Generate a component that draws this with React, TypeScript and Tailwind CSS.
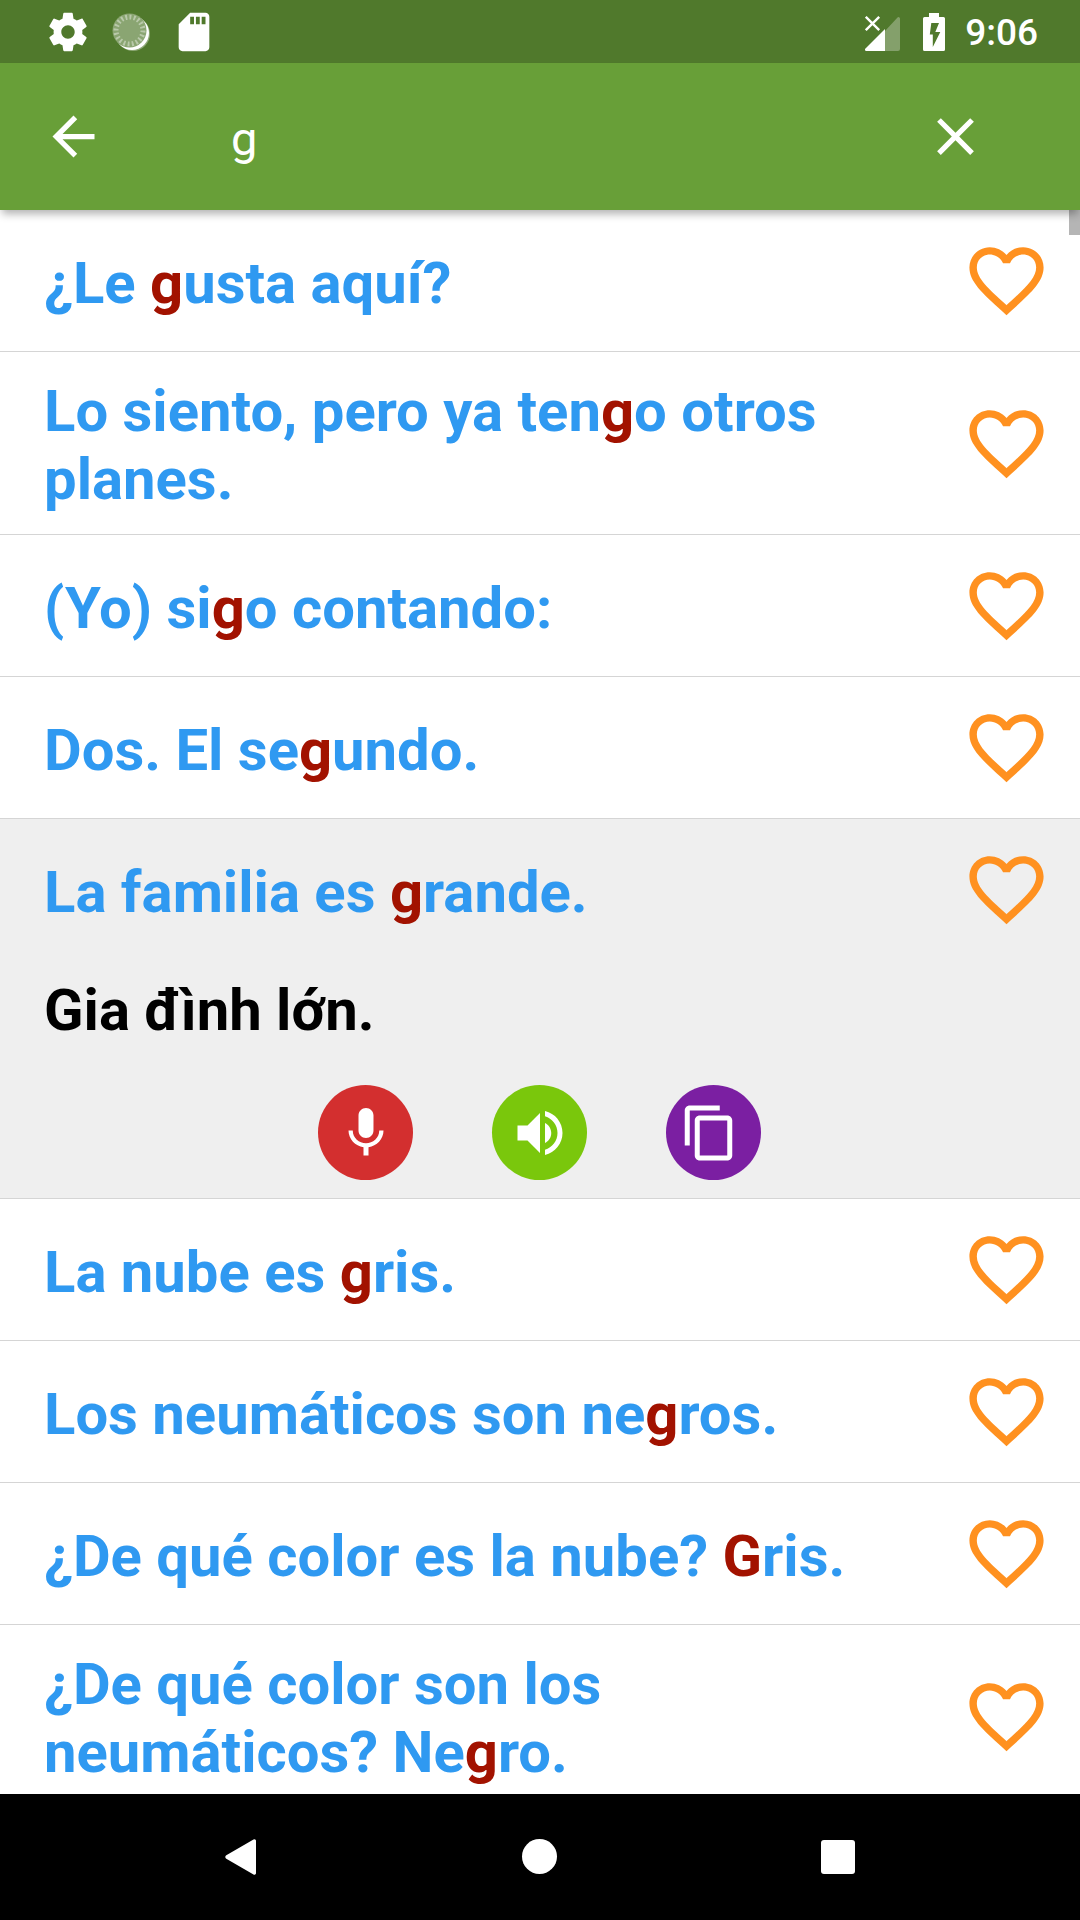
import { useState } from "react";
import type { ReactNode } from "react";
import clsx from "clsx";

type Phrase = {
  text: string;
  translation?: string;
};

const PHRASES: Phrase[] = [
  { text: "¿Le gusta aquí?" },
  { text: "Lo siento, pero ya tengo otros planes." },
  { text: "(Yo) sigo contando:" },
  { text: "Dos. El segundo." },
  { text: "La familia es grande.", translation: "Gia đình lớn." },
  { text: "La nube es gris." },
  { text: "Los neumáticos son negros." },
  { text: "¿De qué color es la nube? Gris." },
  { text: "¿De qué color son los neumáticos? Negro." },
];

function Icon({
  d,
  className,
  viewBox = "0 0 24 24",
}: {
  d: string;
  className: string;
  viewBox?: string;
}) {
  return (
    <svg viewBox={viewBox} fill="currentColor" className={className} aria-hidden="true">
      <path d={d} />
    </svg>
  );
}

const ICONS = {
  settings:
    "M19.43 12.98c.04-.32.07-.64.07-.98s-.03-.66-.07-.98l2.11-1.65c.19-.15.24-.42.12-.64l-2-3.46c-.12-.22-.39-.3-.61-.22l-2.49 1c-.52-.4-1.08-.73-1.69-.98l-.38-2.65A.488.488 0 0 0 14 2h-4c-.25 0-.46.18-.49.42l-.38 2.65c-.61.25-1.17.59-1.69.98l-2.49-1c-.23-.09-.49 0-.61.22l-2 3.46c-.13.22-.07.49.12.64l2.11 1.65c-.04.32-.07.65-.07.98s.03.66.07.98l-2.11 1.65c-.19.15-.24.42-.12.64l2 3.46c.12.22.39.3.61.22l2.49-1c.52.4 1.08.73 1.69.98l.38 2.65c.03.24.24.42.49.42h4c.25 0 .46-.18.49-.42l.38-2.65c.61-.25 1.17-.59 1.69-.98l2.49 1c.23.09.49 0 .61-.22l2-3.46c.12-.22.07-.49-.12-.64l-2.11-1.65zM12 15.5c-1.93 0-3.5-1.57-3.5-3.5s1.57-3.5 3.5-3.5 3.5 1.57 3.5 3.5-1.57 3.5-3.5 3.5z",
  sdCard:
    "M18 2h-8L4.02 8 4 20c0 1.1.9 2 2 2h12c1.1 0 2-.9 2-2V4c0-1.1-.9-2-2-2zm-6 6h-2V4h2v4zm3 0h-2V4h2v4zm3 0h-2V4h2v4z",
  back: "M20 11H7.83l5.59-5.59L12 4l-8 8 8 8 1.41-1.41L7.83 13H20v-2z",
  close:
    "M19 6.41L17.59 5 12 10.59 6.41 5 5 6.41 10.59 12 5 17.59 6.41 19 12 13.41 17.59 19 19 17.59 13.41 12z",
  heart:
    "M16.5 3c-1.74 0-3.41.81-4.5 2.09C10.91 3.81 9.24 3 7.5 3 4.42 3 2 5.42 2 8.5c0 3.78 3.4 6.86 8.55 11.54L12 21.35l1.45-1.32C18.6 15.36 22 12.28 22 8.5 22 5.42 19.58 3 16.5 3zm-4.4 15.55l-.1.1-.1-.1C7.14 14.24 4 11.39 4 8.5 4 6.5 5.5 5 7.5 5c1.54 0 3.04.99 3.57 2.36h1.87C13.46 5.99 14.96 5 16.5 5c2 0 3.5 1.5 3.5 3.5 0 2.89-3.14 5.74-7.9 10.05z",
  mic: "M12 14c1.66 0 2.99-1.34 2.99-3L15 5c0-1.66-1.34-3-3-3S9 3.34 9 5v6c0 1.66 1.34 3 3 3zm5.3-3c0 3-2.54 5.1-5.3 5.1S6.7 14 6.7 11H5c0 3.41 2.72 6.23 6 6.72V21h2v-3.28c3.28-.48 6-3.3 6-6.72h-1.7z",
  volume:
    "M3 9v6h4l5 5V4L7 9H3zm13.5 3c0-1.77-1.02-3.29-2.5-4.03v8.05c1.48-.73 2.5-2.25 2.5-4.02zM14 3.23v2.06c2.89.86 5 3.54 5 6.71s-2.11 5.85-5 6.71v2.06c4.01-.91 7-4.49 7-8.77s-2.99-7.86-7-8.77z",
  copy: "M16 1H4c-1.1 0-2 .9-2 2v14h2V3h12V1zm3 4H8c-1.1 0-2 .9-2 2v14c0 1.1.9 2 2 2h11c1.1 0 2-.9 2-2V7c0-1.1-.9-2-2-2zm0 16H8V7h11v14z",
};

function StatusBar() {
  return (
    <div className="flex h-[63px] shrink-0 items-center justify-between bg-[#50792c] pr-[42px] pl-[45px] text-white">
      <div className="flex items-center gap-[17px]">
        <Icon d={ICONS.settings} className="size-[46px]" />
        <svg viewBox="0 0 46 46" className="size-[46px]" aria-hidden="true">
          <circle cx="25" cy="25" r="17" fill="#fff" fillOpacity="0.35" />
          <circle cx="24" cy="24" r="17" fill="#fff" />
          <circle cx="21.5" cy="21.5" r="17" fill="#8aa572" />
          <circle
            cx="21.5"
            cy="21.5"
            r="13.5"
            fill="none"
            stroke="#b9c9aa"
            strokeWidth="5"
            strokeDasharray="1.8 2.2"
            pathLength="80"
          />
        </svg>
        <Icon d={ICONS.sdCard} className="size-[46px]" />
      </div>
      <div className="flex items-center">
        <svg viewBox="0 0 35 38" className="mr-[23px] h-[38px] w-[35px]" aria-hidden="true">
          <path d="M20 18 32.500 4.500a1.500 1.500 0 0 1 2.500 1V36a2 2 0 0 1-2 2H20z" fill="#84a06b" />
          <path d="M20 16v22H1.500a1.400 1.400 0 0 1-1-2.500z" fill="#fff" />
          <path d="M.8 3.800 14.200 17.200M14.200 3.800.8 17.200" stroke="#fff" strokeWidth="2.400" />
        </svg>
        <svg viewBox="0 0 22 38" className="mr-[20px] h-[38px] w-[22px]" aria-hidden="true">
          <path
            d="M6 0h10v4h4.500a1.500 1.500 0 0 1 1.500 1.500v31a1.500 1.500 0 0 1-1.500 1.500h-19A1.500 1.500 0 0 1 0 36.500v-31A1.500 1.500 0 0 1 1.500 4H6zM8.300 10 6.800 21.500h3V34L17.300 19h-5L16 10z"
            fill="#fff"
            fillRule="evenodd"
          />
        </svg>
        <span className="pt-0.5 text-[37px] leading-[44px] font-medium">9:06</span>
      </div>
    </div>
  );
}

function SearchBar({ query, onChange }: { query: string; onChange: (value: string) => void }) {
  return (
    <header className="z-10 flex h-[147px] shrink-0 items-center bg-[#689f38] pr-[93px] pl-[42px] text-white shadow-[0_6px_8px_-2px_rgba(0,0,0,0.3)]">
      <button type="button" aria-label="Back">
        <Icon d={ICONS.back} className="size-[63px]" />
      </button>
      <input
        type="text"
        aria-label="Search"
        value={query}
        onChange={(e) => onChange(e.target.value)}
        className="ml-[126px] min-w-0 flex-1 bg-transparent pt-1 text-[47px] leading-[56px] outline-none"
      />
      <button type="button" aria-label="Clear" onClick={() => onChange("")}>
        <Icon d={ICONS.close} className="size-[63px]" />
      </button>
    </header>
  );
}

function Highlighted({ text, query }: { text: string; query: string }) {
  const start = query ? text.toLowerCase().indexOf(query.toLowerCase()) : -1;
  if (start < 0) return <>{text}</>;
  const end = start + query.length;

  return (
    <>
      {text.slice(0, start)}
      <mark className="bg-transparent text-[#a21200]">{text.slice(start, end)}</mark>
      {text.slice(end)}
    </>
  );
}

function RoundButton({
  label,
  className,
  children,
}: {
  label: string;
  className: string;
  children: ReactNode;
}) {
  return (
    <button
      type="button"
      aria-label={label}
      className={clsx(
        "flex size-[95px] items-center justify-center rounded-full text-white",
        className
      )}
    >
      {children}
    </button>
  );
}

function PhraseRow({
  phrase,
  query,
  open,
  onToggle,
}: {
  phrase: Phrase;
  query: string;
  open: boolean;
  onToggle: () => void;
}) {
  return (
    <li className={clsx("border-b border-[#d5d5d5]", open && "bg-[#efefef]")}>
      <div className="flex min-h-[141px] items-center pr-[29px] pl-11">
        <button
          type="button"
          aria-expanded={open}
          onClick={onToggle}
          className="min-w-0 flex-1 pt-[25px] pr-8 pb-[21px] text-left text-[58px] leading-[68px] font-bold text-[#2f99f1]"
        >
          <Highlighted text={phrase.text} query={query} />
        </button>
        <button type="button" aria-label="Add to favorites" className="shrink-0 text-[#ff9120]">
          <Icon d={ICONS.heart} className="size-[89px]" />
        </button>
      </div>

      {open && phrase.translation && (
        <div className="pt-4 pb-[18px]">
          <p className="px-11 text-[58px] leading-[68px] font-bold text-black">
            {phrase.translation}
          </p>
          <div className="mt-[41px] flex justify-center gap-[79px] pr-px">
            <RoundButton label="Record" className="bg-[#d32f2f]">
              <Icon d={ICONS.mic} className="size-[60px]" />
            </RoundButton>
            <RoundButton label="Listen" className="bg-[#7ac70c]">
              <Icon d={ICONS.volume} className="size-[60px]" />
            </RoundButton>
            <RoundButton label="Copy" className="bg-[#7b1fa2]">
              <Icon d={ICONS.copy} viewBox="1.7 0 24 24" className="size-[60px]" />
            </RoundButton>
          </div>
        </div>
      )}
    </li>
  );
}

function NavBar() {
  return (
    <nav className="z-10 grid h-[126px] shrink-0 grid-cols-3 bg-black px-[93px]">
      <button type="button" aria-label="Back" className="flex items-center justify-center">
        <svg viewBox="0 0 36 36" fill="#fff" className="size-9" aria-hidden="true">
          <path d="M2.300 16.200 29.500.5a1.600 1.600 0 0 1 2.500 1.400v32.200a1.600 1.600 0 0 1-2.500 1.400L2.300 19.800a2.100 2.100 0 0 1 0-3.600z" />
        </svg>
      </button>
      <button type="button" aria-label="Home" className="flex items-center justify-center pr-px pb-px">
        <span className="size-[35px] rounded-full bg-white" />
      </button>
      <button type="button" aria-label="Overview" className="flex items-center justify-center">
        <span className="size-[34px] rounded-[3px] bg-white" />
      </button>
    </nav>
  );
}

export default function App() {
  const [query, setQuery] = useState("g");
  const [openIndex, setOpenIndex] = useState(4);

  return (
    <div className="flex h-screen flex-col overflow-hidden bg-white font-[Roboto,sans-serif]">
      <StatusBar />
      <SearchBar query={query} onChange={setQuery} />
      <main className="relative min-h-0 flex-1 overflow-hidden">
        <ul>
          {PHRASES.map((phrase, i) => (
            <PhraseRow
              key={phrase.text}
              phrase={phrase}
              query={query}
              open={openIndex === i}
              onToggle={() => setOpenIndex(openIndex === i ? -1 : i)}
            />
          ))}
        </ul>
        <div className="absolute top-0 right-0 h-[25px] w-[11px] bg-[#b5b5b5]" />
      </main>
      <NavBar />
    </div>
  );
}
